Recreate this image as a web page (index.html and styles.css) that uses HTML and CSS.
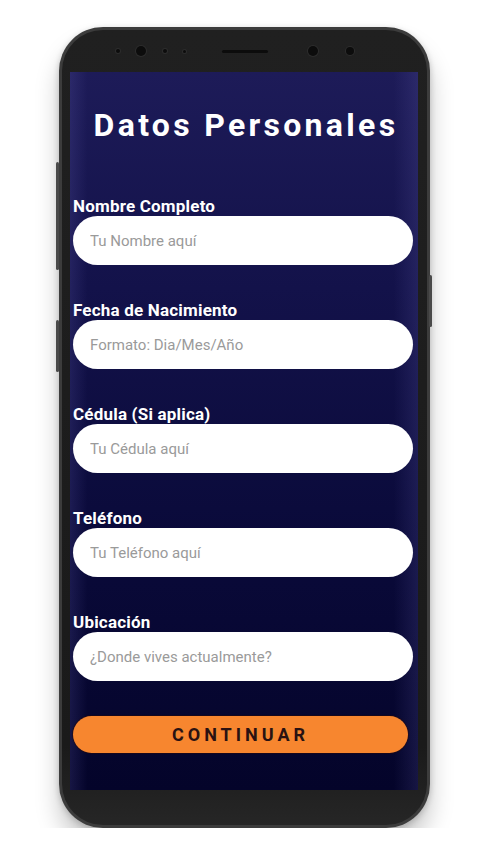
FILE: index.html
```html
<!DOCTYPE html>
<html lang="es">
<head>
    <meta charset="UTF-8">
    <meta name="viewport" content="width=device-width, initial-scale=1.0">
    <title>Datos Personales</title>
    <link rel="stylesheet" href="styles.css">
</head>
<body>
    <div class="stage">
        <div class="phone">
            <span class="side-btn side-left-1"></span>
            <span class="side-btn side-left-2"></span>
            <span class="side-btn side-right"></span>
            <div class="phone-inner">
                <div class="bezel-top">
                    <span class="dot dot-1"></span>
                    <span class="dot dot-2"></span>
                    <span class="dot dot-3"></span>
                    <span class="dot dot-4"></span>
                    <span class="speaker"></span>
                    <span class="dot cam-1"></span>
                    <span class="dot cam-2"></span>
                </div>
                <div class="screen">
                    <h1 class="title">Datos Personales</h1>
                    <form class="form">
                        <div class="field">
                            <label for="nombre">Nombre Completo</label>
                            <input id="nombre" type="text" placeholder="Tu Nombre aquí">
                        </div>
                        <div class="field">
                            <label for="fecha">Fecha de Nacimiento</label>
                            <input id="fecha" type="text" placeholder="Formato: Dia/Mes/Año">
                        </div>
                        <div class="field">
                            <label for="cedula">Cédula (Si aplica)</label>
                            <input id="cedula" type="text" placeholder="Tu Cédula aquí">
                        </div>
                        <div class="field">
                            <label for="telefono">Teléfono</label>
                            <input id="telefono" type="text" placeholder="Tu Teléfono aquí">
                        </div>
                        <div class="field">
                            <label for="ubicacion">Ubicación</label>
                            <input id="ubicacion" type="text" placeholder="¿Donde vives actualmente?">
                        </div>
                        <button type="button" class="btn-continue">CONTINUAR</button>
                    </form>
                </div>
            </div>
        </div>
    </div>
</body>
</html>
```

FILE: styles.css
```css
body {
    margin: 0;
    background-color: #fff;
    font-family: Roboto, "Liberation Sans", sans-serif;
}
.stage {
    padding: 27px 0 0 59px;
}
.phone {
    position: relative;
    width: 371px;
    height: 801px;
    box-sizing: border-box;
    padding: 3px;
    border-radius: 44px;
    background-color: #3c3c3c;
    box-shadow: 0 18px 24px rgba(0, 0, 0, 0.22), 0 2px 6px rgba(0, 0, 0, 0.2);
}
.side-btn {
    position: absolute;
    width: 3px;
    background-color: #4a4a4a;
    border-radius: 2px;
}
.side-left-1 {
    left: -3px;
    top: 135px;
    height: 108px;
}
.side-left-2 {
    left: -3px;
    top: 293px;
    height: 52px;
}
.side-right {
    right: -2px;
    top: 248px;
    height: 52px;
}
.phone-inner {
    height: 100%;
    box-sizing: border-box;
    padding: 42px 9px 35px 8px;
    border-radius: 41px;
    background: linear-gradient(180deg, #202020, #1a1a1a 90%, #262626);
}
.bezel-top {
    display: flex;
    align-items: center;
    height: 42px;
    margin-top: -42px;
}
.dot {
    display: block;
    border-radius: 50%;
    background-color: #0c0c0c;
    box-shadow: 0 0 0 1px #2c2c2c;
}
.dot-1 { width: 4px; height: 4px; margin-left: 46px; }
.dot-2 { width: 10px; height: 10px; margin-left: 16px; }
.dot-3 { width: 4px; height: 4px; margin-left: 17px; }
.dot-4 { width: 3px; height: 3px; margin-left: 16px; }
.cam-1 { width: 10px; height: 10px; margin-left: 40px; }
.cam-2 { width: 8px; height: 8px; margin-left: 28px; }
.speaker {
    display: block;
    width: 46px;
    height: 3px;
    margin-left: 36px;
    border-radius: 2px;
    background-color: #0c0c0c;
}
.screen {
    display: flex;
    flex-direction: column;
    height: 718px;
    box-sizing: border-box;
    padding: 34px 5px 0 3px;
    background:
        linear-gradient(90deg, rgba(120, 115, 200, 0.16), rgba(120, 115, 200, 0) 5%, rgba(120, 115, 200, 0) 93%, rgba(120, 115, 200, 0.16)),
        linear-gradient(180deg, #1d1b58 0%, #13124a 30%, #0a0a3a 65%, #04042a 100%);
}
.title {
    margin: 0;
    padding-left: 6px;
    color: #fff;
    font-size: 32px;
    font-weight: 700;
    letter-spacing: 3.3px;
    text-align: center;
}
.form {
    display: flex;
    flex-direction: column;
    gap: 38px;
    margin-top: 55px;
}
.field {
    display: flex;
    flex-direction: column;
}
.field label {
    color: #fff;
    font-size: 17px;
    font-weight: 700;
    line-height: 15px;
    padding-bottom: 2px;
    letter-spacing: 0.2px;
}
.field input {
    height: 49px;
    box-sizing: border-box;
    padding: 0 17px;
    border: none;
    border-radius: 25px;
    background-color: #fff;
    font-family: Roboto, "Liberation Sans", sans-serif;
    font-size: 15px;
    color: #333;
    outline: none;
}
.field input::placeholder {
    color: #9a9a9a;
}
.btn-continue {
    width: 335px;
    height: 37px;
    margin-top: -3px;
    border: none;
    border-radius: 19px;
    background-color: #f7862f;
    box-shadow: 0 0 0 1px rgba(40, 10, 10, 0.5);
    color: #2a1212;
    font-family: Roboto, "Liberation Sans", sans-serif;
    font-size: 18px;
    font-weight: 700;
    letter-spacing: 4px;
    cursor: pointer;
}
```
